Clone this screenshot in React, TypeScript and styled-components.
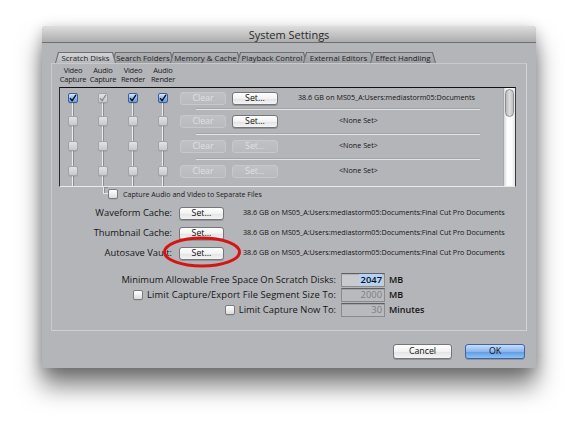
import React from "react";
import styled, { createGlobalStyle } from "styled-components";

const UI = `"Open Sans", "Lato", "DejaVu Sans", sans-serif`;

const Global = createGlobalStyle`
  html, body { margin: 0; padding: 0; background: #fff; width: 578px; height: 428px; overflow: hidden; }
  body { font-family: ${UI}; color: #111; }
  * { box-sizing: border-box; }
`;

const Page = styled.div`
  padding: 26px 0 0 42px;
`;

const Window = styled.div`
  position: relative;
  width: 494px;
  height: 342px;
  background: #b4b5b9;
  border-radius: 4px 4px 0 0;
  box-shadow: 0 18px 24px rgba(0, 0, 0, 0.5), 0 3px 14px rgba(0, 0, 0, 0.22);
  display: flex;
  flex-direction: column;
`;

const TitleBar = styled.div`
  flex: none;
  height: 17px;
  border-radius: 4px 4px 0 0;
  background: linear-gradient(#dedede, #adadad);
  border-bottom: 1px solid #6f6f6f;
  text-align: center;
  font: 11px/17px ${UI};
  color: #2a2a2a;
`;

const Body = styled.div`
  flex: 1;
  display: flex;
  flex-direction: column;
  padding: 9px 9px 0 9px;
`;

const TabStrip = styled.div`
  display: flex;
  height: 11px;
  padding-left: 4px;
  position: relative;
  z-index: 1;
`;

const TabShape = styled.div<{ $w: number; $active?: boolean }>`
  width: ${(p) => p.$w + 4}px;
  margin-right: -4px;
  height: 11px;
  background: #6d6e72;
  clip-path: polygon(3px 0, calc(100% - 3px) 0, 100% 100%, 0 100%);
  display: flex;
  padding: 1px 1px 0 1px;
  z-index: ${(p) => (p.$active ? 2 : 1)};
`;

const TabFace = styled.div<{ $active?: boolean }>`
  flex: 1;
  background: ${(p) =>
    p.$active ? "linear-gradient(#d2d3d6, #b8b9bd)" : "linear-gradient(#b0b1b5, #9d9ea2)"};
  clip-path: polygon(3px 0, calc(100% - 3px) 0, 100% 100%, 0 100%);
  font: 7.8px/10px ${UI};
  color: #1e1e1e;
  text-align: center;
  white-space: nowrap;
`;

const Panel = styled.div`
  height: 268px;
  border: 1px solid #c8c9cc;
  border-right-color: #d4d5d8;
  border-bottom-color: #cfd0d3;
  padding: 1px 10px 0 7px;
  display: flex;
  flex-direction: column;
`;

const HeaderRow = styled.div`
  display: flex;
  height: 22px;
  padding-top: 1px;
  margin-left: -1px;
`;

const HeaderCol = styled.div`
  width: 30px;
  text-align: center;
  font: 7.5px/9px ${UI};
  letter-spacing: -0.2px;
  color: #1a1a1a;
  white-space: nowrap;
`;

const ListBox = styled.div`
  height: 100px;
  display: flex;
  border-top: 1px solid #111;
  border-left: 1px solid #2c2c2c;
  border-right: 1px solid #3a3a3a;
  border-bottom: 1px solid #e9e9ea;
`;

const ListContent = styled.div`
  flex: 1;
  display: flex;
  flex-direction: column;
  background-image: linear-gradient(#ececec, #ececec), linear-gradient(#ececec, #ececec),
    linear-gradient(#ececec, #ececec), linear-gradient(#ececec, #ececec),
    linear-gradient(#8c8d91, #8c8d91), linear-gradient(#8c8d91, #8c8d91),
    linear-gradient(#8c8d91, #8c8d91), linear-gradient(#8c8d91, #8c8d91);
  background-size: 1px calc(100% - 10px);
  background-repeat: no-repeat;
  background-position: 12px 10px, 42px 10px, 72px 10px, 102px 10px, 13px 10px, 43px 10px,
    73px 10px, 103px 10px;
`;

const ListRow = styled.div<{ $first?: boolean }>`
  display: flex;
  align-items: center;
  height: ${(p) => (p.$first ? 21 : 24)}px;
  padding-bottom: ${(p) => (p.$first ? 1 : 2)}px;
`;

const Separator = styled.div`
  height: 1px;
  margin-left: 136px;
  width: 284px;
  background: #e3e4e6;
  box-shadow: 0 -1px 0 #a4a5a9;
`;

const CheckGroup = styled.div`
  display: flex;
  gap: 20px;
  padding-left: 8px;
`;

const Box = styled.span<{ $checked?: boolean; $disabled?: boolean }>`
  width: 10px;
  height: 10px;
  flex: none;
  border-radius: 2px;
  display: inline-flex;
  align-items: center;
  justify-content: center;
  border: 1px solid
    ${(p) => (p.$checked && !p.$disabled ? "#3d5f99" : p.$disabled ? "#a2a3a7" : "#7b7c80")};
  background: ${(p) =>
    p.$checked && !p.$disabled
      ? "linear-gradient(#d9e8fb, #8ab6ee 55%, #6aa0e6)"
      : p.$disabled
      ? "linear-gradient(#e2e2e3, #c8c9cc)"
      : "linear-gradient(#ffffff, #dcdcdc)"};
  box-shadow: 0 0.5px 0.5px rgba(0, 0, 0, 0.15);
  svg {
    display: block;
  }
`;

const Btn = styled.div<{ $disabled?: boolean; $w?: number; $h?: number; $primary?: boolean }>`
  width: ${(p) => p.$w ?? 46}px;
  height: ${(p) => p.$h ?? 13}px;
  flex: none;
  border-radius: 3px;
  display: flex;
  align-items: center;
  justify-content: center;
  font: 8.8px/1 ${UI};
  color: ${(p) => (p.$disabled ? "#dfe0e2" : "#111")};
  border: 1px solid ${(p) => (p.$disabled ? "#c7c8cb" : p.$primary ? "#3f63a8" : "#75767a")};
  background: ${(p) =>
    p.$primary
      ? "linear-gradient(#c9def8, #89b6ee 50%, #5d9be6 52%, #8fc1f3)"
      : p.$disabled
      ? "linear-gradient(#c0c1c4, #b9babd)"
      : "linear-gradient(#ffffff, #f2f2f2 50%, #e3e3e3 52%, #f4f4f4)"};
  box-shadow: ${(p) => (p.$disabled ? "none" : "0 1px 0.5px rgba(0,0,0,0.18)")};
`;

const ClearBtn = styled(Btn)`
  margin-left: 12px;
`;

const RowSetBtn = styled(Btn)`
  margin-left: 6px;
`;

const Info = styled.div<{ $indent?: number }>`
  margin-left: ${(p) => 20 + (p.$indent ?? 0)}px;
  font: 7.2px/1 ${UI};
  color: #141414;
  white-space: nowrap;
`;

const ScrollTrack = styled.div`
  width: 12px;
  flex: none;
  background: linear-gradient(90deg, #d9d9d9, #ffffff 30%, #fbfbfb 70%, #e6e6e6);
  border-left: 1px solid #a7a8ab;
  padding: 1px 1px 0 1px;
`;

const ScrollThumb = styled.div`
  height: 28px;
  border-radius: 5px;
  border: 1px solid #8f8f92;
  background: linear-gradient(90deg, #b9b9bb, #dcdcdd 50%, #c1c1c3);
`;

const CaptureRow = styled.div`
  display: flex;
  align-items: flex-start;
  height: 16px;
  padding-left: 44px;
`;

const Elbow = styled.div`
  width: 5px;
  height: 7px;
  flex: none;
  border-left: 1px solid #e8e8e8;
  border-bottom: 1px solid #e8e8e8;
  box-shadow: 1px 1px 0 #8c8d91 inset;
`;

const CaptureCheck = styled(Box)`
  margin-top: 2px;
`;

const CaptureLabel = styled.span`
  margin-left: 5px;
  margin-top: 2px;
  font: 7.1px/10px ${UI};
  color: #1a1a1a;
  white-space: nowrap;
`;

const CacheRow = styled.div`
  display: flex;
  align-items: center;
  height: 20px;
`;

const CacheLabel = styled.div`
  width: 113px;
  text-align: right;
  font: 9.4px/1 ${UI};
  color: #151515;
  white-space: nowrap;
`;

const CacheSet = styled(Btn)`
  margin-left: 7px;
`;

const CacheInfo = styled(Info)`
  margin-left: 19px;
`;

const Limits = styled.div`
  margin-top: 9px;
  display: flex;
  flex-direction: column;
`;

const LimitRow = styled.div`
  display: flex;
  align-items: center;
  height: 15px;
`;

const LimitLabel = styled.div<{ $spread?: boolean }>`
  width: 277px;
  display: flex;
  justify-content: flex-end;
  align-items: center;
  gap: 4px;
  font: 9.4px/1 ${UI};
  letter-spacing: ${(p) => (p.$spread ? "0.1px" : "0")};
  color: #151515;
  white-space: nowrap;
`;

const Field = styled.div<{ $active?: boolean }>`
  margin-left: 5px;
  width: 44px;
  height: 14px;
  border: 1px solid #8a8b8e;
  border-top-color: #5f6063;
  background: ${(p) => (p.$active ? "#c9cacd" : "#b9babd")};
  box-shadow: inset 0 1px 0 rgba(0, 0, 0, 0.12);
  display: flex;
  align-items: center;
  justify-content: flex-end;
  padding-right: 2px;
  font: ${(p) => (p.$active ? "600 " : "")}9.4px/1 ${UI};
  color: ${(p) => (p.$active ? "#101010" : "#7d7e81")};
`;

const Selected = styled.span`
  background: #b3d2f7;
  padding: 1px 0 1px 2px;
`;

const Unit = styled.div`
  margin-left: 4px;
  font: 600 9px/1 ${UI};
  color: #151515;
`;

const Footer = styled.div`
  display: flex;
  justify-content: flex-end;
  gap: 13px;
  padding: 13px 2px 0 0;
`;

const Annotation = styled.svg`
  position: absolute;
  left: 119px;
  top: 209px;
  pointer-events: none;
`;

const Check = ({ color = "#111" }: { color?: string }) => (
  <svg width="9" height="9" viewBox="0 0 9 9">
    <path d="M1.6 4.6 L3.6 7 L7.6 0.8" fill="none" stroke={color} strokeWidth="1.6" strokeLinecap="round" strokeLinejoin="round" />
  </svg>
);

const tabs: [string, number][] = [
  ["Scratch Disks", 57],
  ["Search Folders", 58],
  ["Memory & Cache", 67],
  ["Playback Control", 66],
  ["External Editors", 67],
  ["Effect Handling", 62],
];

const headers = [
  ["Video", "Capture"],
  ["Audio", "Capture"],
  ["Video", "Render"],
  ["Audio", "Render"],
];

type Row = { checks: (null | "on" | "dim")[]; setOn: boolean; info: string; indent: number };

const rows: Row[] = [
  { checks: ["on", "dim", "on", "on"], setOn: true, info: "38.6 GB on  MS05_A:Users:mediastorm05:Documents", indent: 0 },
  { checks: [null, null, null, null], setOn: true, info: "<None Set>", indent: 41 },
  { checks: [null, null, null, null], setOn: false, info: "<None Set>", indent: 41 },
  { checks: [null, null, null, null], setOn: false, info: "<None Set>", indent: 41 },
];

const path = "38.6 GB on  MS05_A:Users:mediastorm05:Documents:Final Cut Pro Documents";

export default function App() {
  return (
    <Page>
      <Global />
      <Window>
        <TitleBar>System Settings</TitleBar>
        <Body>
          <TabStrip>
            {tabs.map(([t, w], i) => (
              <TabShape key={t} $w={w} $active={i === 0}>
                <TabFace $active={i === 0}>{t}</TabFace>
              </TabShape>
            ))}
          </TabStrip>
          <Panel>
            <HeaderRow>
              {headers.map(([a, b], i) => (
                <HeaderCol key={i}>
                  {a}
                  <br />
                  {b}
                </HeaderCol>
              ))}
            </HeaderRow>
            <ListBox>
              <ListContent>
                {rows.map((r, i) => (
                  <React.Fragment key={i}>
                    {i > 0 && <Separator />}
                    <ListRow $first={i === 0}>
                      <CheckGroup>
                        {r.checks.map((c, j) => (
                          <Box key={j} $checked={c !== null} $disabled={c !== "on"}>
                            {c === "on" && <Check />}
                            {c === "dim" && <Check color="#8d8e91" />}
                          </Box>
                        ))}
                      </CheckGroup>
                      <ClearBtn $disabled>Clear</ClearBtn>
                      <RowSetBtn $disabled={!r.setOn}>Set...</RowSetBtn>
                      <Info $indent={r.indent}>{r.info}</Info>
                    </ListRow>
                  </React.Fragment>
                ))}
              </ListContent>
              <ScrollTrack>
                <ScrollThumb />
              </ScrollTrack>
            </ListBox>
            <CaptureRow>
              <Elbow />
              <CaptureCheck />
              <CaptureLabel>Capture Audio and Video to Separate Files</CaptureLabel>
            </CaptureRow>
            {["Waveform Cache:", "Thumbnail Cache:", "Autosave Vault:"].map((l) => (
              <CacheRow key={l}>
                <CacheLabel>{l}</CacheLabel>
                <CacheSet $w={45}>Set...</CacheSet>
                <CacheInfo>{path}</CacheInfo>
              </CacheRow>
            ))}
            <Limits>
              <LimitRow>
                <LimitLabel>Minimum Allowable Free Space On Scratch Disks:</LimitLabel>
                <Field $active>
                  <Selected>2047</Selected>
                </Field>
                <Unit>MB</Unit>
              </LimitRow>
              <LimitRow>
                <LimitLabel $spread>
                  <Box />
                  Limit Capture/Export File Segment Size To:
                </LimitLabel>
                <Field>2000</Field>
                <Unit>MB</Unit>
              </LimitRow>
              <LimitRow>
                <LimitLabel>
                  <Box />
                  Limit Capture Now To:
                </LimitLabel>
                <Field>30</Field>
                <Unit>Minutes</Unit>
              </LimitRow>
            </Limits>
          </Panel>
          <Footer>
            <Btn $w={59} $h={15}>Cancel</Btn>
            <Btn $w={60} $h={15} $primary>OK</Btn>
          </Footer>
        </Body>
        <Annotation width="82" height="34" viewBox="0 0 82 34">
          <ellipse cx="41" cy="17" rx="37.5" ry="14" fill="none" stroke="#d51414" strokeWidth="3" />
        </Annotation>
      </Window>
    </Page>
  );
}
